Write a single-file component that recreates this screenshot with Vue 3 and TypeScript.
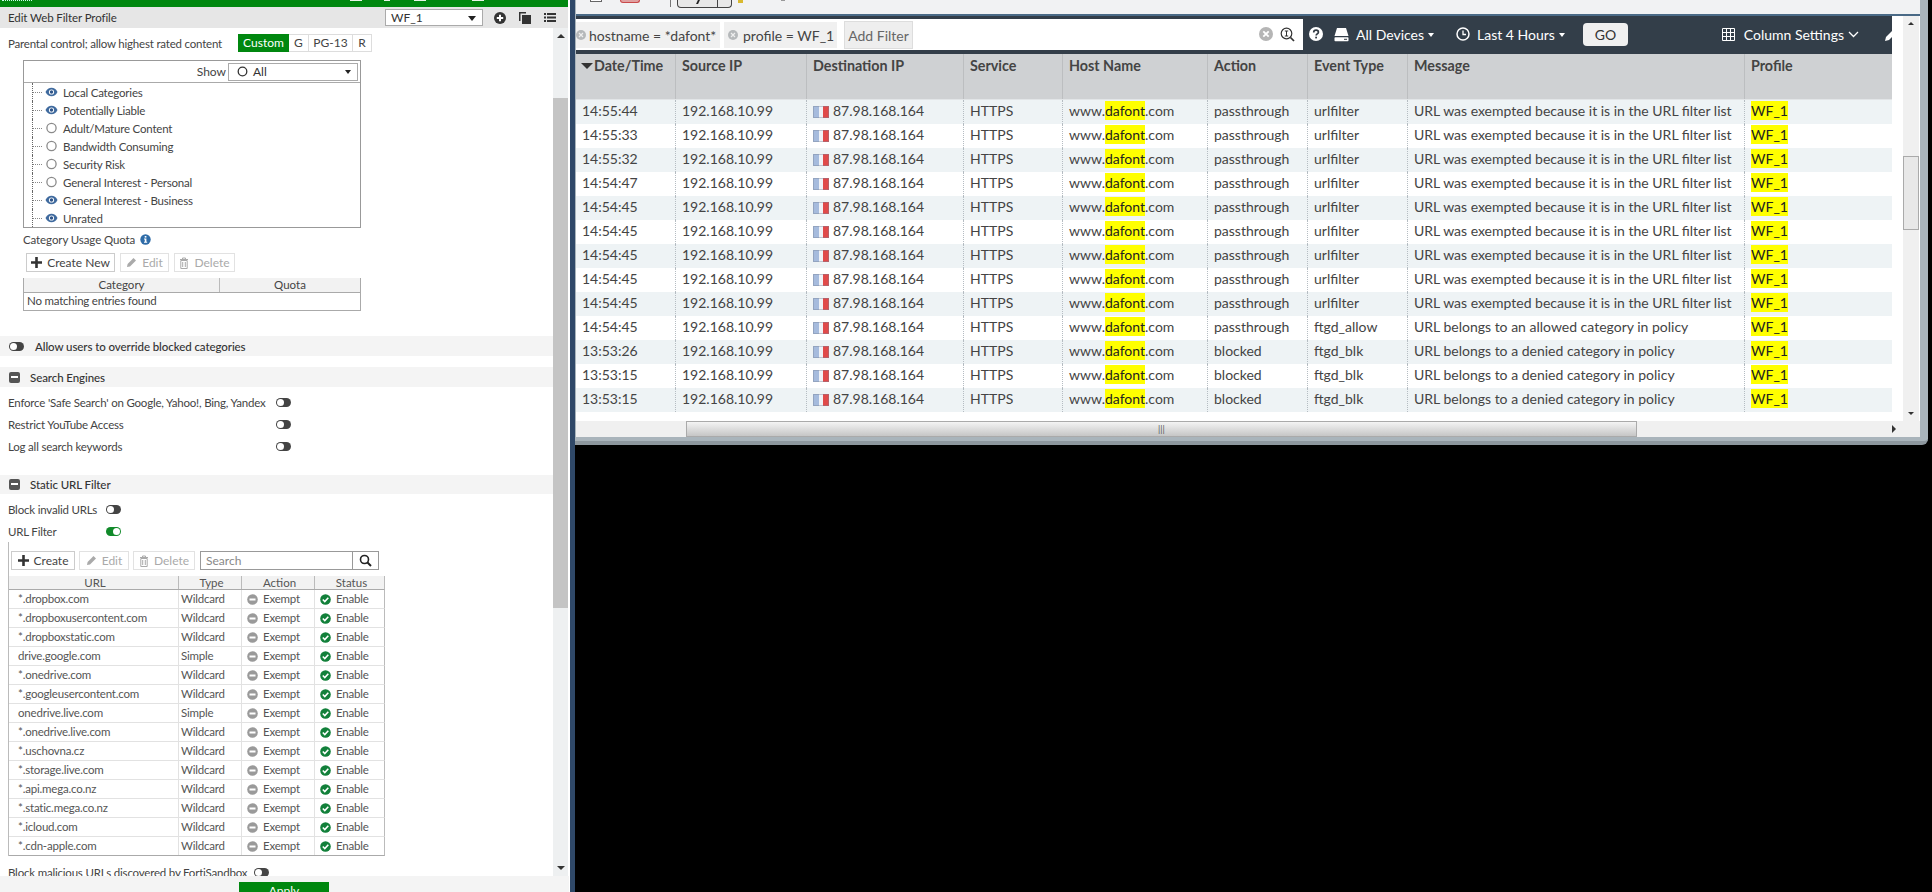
<script setup lang="ts">
interface LogRow { time: string; action: string; type: string; msg: string }
const exempt = 'URL was exempted because it is in the URL filter list'
const denied = 'URL belongs to a denied category in policy'
const logRows: LogRow[] = [
  ...['14:55:44', '14:55:33', '14:55:32', '14:54:47', '14:54:45', '14:54:45', '14:54:45', '14:54:45', '14:54:45'].map(time => ({ time, action: 'passthrough', type: 'urlfilter', msg: exempt })),
  { time: '14:54:45', action: 'passthrough', type: 'ftgd_allow', msg: 'URL belongs to an allowed category in policy' },
  { time: '13:53:26', action: 'blocked', type: 'ftgd_blk', msg: denied },
  { time: '13:53:15', action: 'blocked', type: 'ftgd_blk', msg: denied },
  { time: '13:53:15', action: 'blocked', type: 'ftgd_blk', msg: denied },
]
const logHead = ['Source IP', 'Destination IP', 'Service', 'Host Name', 'Action', 'Event Type', 'Message', 'Profile']
const cats = [
  { n: 'Local Categories', eye: true }, { n: 'Potentially Liable', eye: true },
  { n: 'Adult/Mature Content', eye: false }, { n: 'Bandwidth Consuming', eye: false },
  { n: 'Security Risk', eye: false }, { n: 'General Interest - Personal', eye: false },
  { n: 'General Interest - Business', eye: true }, { n: 'Unrated', eye: true },
]
const urls = [
  ['*.dropbox.com', 'Wildcard'], ['*.dropboxusercontent.com', 'Wildcard'], ['*.dropboxstatic.com', 'Wildcard'],
  ['drive.google.com', 'Simple'], ['*.onedrive.com', 'Wildcard'], ['*.googleusercontent.com', 'Wildcard'],
  ['onedrive.live.com', 'Simple'], ['*.onedrive.live.com', 'Wildcard'], ['*.uschovna.cz', 'Wildcard'],
  ['*.storage.live.com', 'Wildcard'], ['*.api.mega.co.nz', 'Wildcard'], ['*.static.mega.co.nz', 'Wildcard'],
  ['*.icloud.com', 'Wildcard'], ['*.cdn-apple.com', 'Wildcard'],
]
</script>

<template>
  <div class="root">
    <section class="left">
      <div class="green"><i class="dash"></i><i class="bit b1"></i><i class="bit b2"></i><i class="bit b3"></i><i class="bit b4"></i></div>
      <header class="title">
        <span>Edit Web Filter Profile</span>
        <div class="sel prof"><span>WF_1</span><i class="caret"></i></div>
        <svg class="ti" width="14" height="14" viewBox="0 0 14 14"><circle cx="7" cy="7" r="6" fill="#333"/><path d="M3.8 7h6.4M7 3.8v6.4" stroke="#fff" stroke-width="2"/></svg>
        <svg class="ti" width="14" height="14" viewBox="0 0 14 14"><path d="M1 1h7v1.500H2.500V10H1z" fill="#333"/><rect x="4" y="4" width="9" height="9" fill="#333"/></svg>
        <svg class="ti" width="14" height="14" viewBox="0 0 14 14"><path d="M1 2h2v2H1zM4 2h9v2H4zM1 5.500h2v2H1zM4 5.500h9v2H4zM1 9h2v2H1zM4 9h9v2H4z" fill="#333"/></svg>
      </header>
      <div class="mid">
        <div class="content">
          <div class="parental">
            <span class="plabel">Parental control; allow highest rated content</span>
            <div class="seg"><b>Custom</b><span class="sg">G</span><span class="sp">PG-13</span><span class="sr">R</span></div>
          </div>
          <div class="tree">
            <div class="treehead">
              <span>Show</span>
              <div class="sel show"><svg width="11" height="11" viewBox="0 0 11 11"><circle cx="5.500" cy="5.500" r="4.300" fill="none" stroke="#333" stroke-width="1.300"/></svg><span>All</span><i class="caret small"></i></div>
            </div>
            <div v-for="c in cats" :key="c.n" class="treerow">
              <i class="branch"></i>
              <svg v-if="c.eye" class="tic" width="13" height="10" viewBox="0 0 13 10"><path d="M.5 5C2 2 4 .8 6.500.8S11 2 12.500 5C11 8 9 9.200 6.500 9.200S2 8 .5 5z" fill="#3f6a9e"/><circle cx="6.500" cy="5" r="2.600" fill="#fff"/><circle cx="6.500" cy="5" r="1.700" fill="#2f5488"/></svg>
              <svg v-else class="tic" width="13" height="12" viewBox="0 0 13 12"><circle cx="6.500" cy="6" r="4.600" fill="none" stroke="#8a8a8a" stroke-width="1.300"/></svg>
              <span>{{ c.n }}</span>
            </div>
          </div>
          <div class="quota">Category Usage Quota
            <svg width="11" height="11" viewBox="0 0 11 11"><circle cx="5.500" cy="5.500" r="5.200" fill="#2f6ca8"/><rect x="4.700" y="2" width="1.700" height="1.600" fill="#fff"/><path d="M4 4.500h2.400v3.300h.8v1H4v-1h.8V5.500H4z" fill="#fff"/></svg>
          </div>
          <div class="btns quotabtns">
            <div class="btn w89"><svg width="11" height="11" viewBox="0 0 11 11"><path d="M4.200 0h2.600v4.200H11v2.600H6.800V11H4.200V6.800H0V4.200h4.200z" fill="#333"/></svg>Create New</div>
            <div class="btn dis w49"><svg width="11" height="11" viewBox="0 0 11 11"><path d="M1 10l.6-3L7.500 1l2.500 2.500L4 9.500z" fill="#aaa"/></svg>Edit</div>
            <div class="btn dis w61"><svg width="10" height="12" viewBox="0 0 10 12"><path d="M1 2.500h8M3.500 2.500V1h3v1.500M1.800 3.500h6.400V11.500H1.800z" fill="none" stroke="#aaa"/><path d="M3.700 5v5M6.300 5v5" stroke="#aaa"/></svg>Delete</div>
          </div>
          <div class="qtable">
            <div class="qhead"><span class="qc1">Category</span><span class="qc2">Quota</span></div>
            <div class="qbody">No matching entries found</div>
          </div>

          <div class="band allow"><i class="tog"></i><span>Allow users to override blocked categories</span></div>
          <div class="band se"><i class="minus"></i><span>Search Engines</span></div>
          <div class="frow f1"><span class="flabel wide">Enforce 'Safe Search' on Google, Yahoo!, Bing, Yandex</span><i class="tog"></i></div>
          <div class="frow"><span class="flabel wide">Restrict YouTube Access</span><i class="tog"></i></div>
          <div class="frow"><span class="flabel wide">Log all search keywords</span><i class="tog"></i></div>
          <div class="band su"><i class="minus"></i><span>Static URL Filter</span></div>
          <div class="frow f1"><span class="flabel">Block invalid URLs</span><i class="tog"></i></div>
          <div class="frow"><span class="flabel">URL Filter</span><i class="tog on"></i></div>
          <div class="urlwrap">
            <div class="btns urlbtns">
              <div class="btn w64"><svg width="11" height="11" viewBox="0 0 11 11"><path d="M4.200 0h2.600v4.200H11v2.600H6.800V11H4.200V6.800H0V4.200h4.200z" fill="#333"/></svg>Create</div>
              <div class="btn dis w50"><svg width="11" height="11" viewBox="0 0 11 11"><path d="M1 10l.6-3L7.500 1l2.500 2.500L4 9.500z" fill="#aaa"/></svg>Edit</div>
              <div class="btn dis w62"><svg width="10" height="12" viewBox="0 0 10 12"><path d="M1 2.500h8M3.500 2.500V1h3v1.500M1.800 3.500h6.400V11.500H1.800z" fill="none" stroke="#aaa"/><path d="M3.700 5v5M6.300 5v5" stroke="#aaa"/></svg>Delete</div>
              <div class="search"><span>Search</span><div class="sbtn"><svg width="13" height="13" viewBox="0 0 13 13"><circle cx="5.500" cy="5.500" r="4" fill="none" stroke="#222" stroke-width="1.600"/><path d="M8.500 8.500L12 12" stroke="#222" stroke-width="2"/></svg></div></div>
            </div>
            <div class="urow uhead"><span>URL</span><span>Type</span><span>Action</span><span>Status</span></div>
            <div v-for="u in urls" :key="u[0]" class="urow">
              <span class="u1">{{ u[0] }}</span>
              <span class="u2">{{ u[1] }}</span>
              <span class="st"><svg width="11" height="11" viewBox="0 0 11 11"><circle cx="5.500" cy="5.500" r="5.300" fill="#9a9a9a"/><rect x="2.500" y="4.500" width="6" height="2" fill="#fff"/></svg>Exempt</span>
              <span class="st"><svg width="11" height="11" viewBox="0 0 11 11"><circle cx="5.500" cy="5.500" r="5.300" fill="#12803a"/><path d="M2.800 5.500l2 2 3.500-3.700" fill="none" stroke="#fff" stroke-width="1.600"/></svg>Enable</span>
            </div>
          </div>
          <div class="frow mal"><span>Block malicious URLs discovered by FortiSandbox</span><i class="tog"></i></div>
        </div>
        <div class="lscroll">
          <i class="up"></i>
          <div class="lthumb"></div>
          <i class="down"></i>
        </div>
      </div>
      <footer class="foot"><div class="apply">Apply</div></footer>
    </section>

    <div class="strip"></div>

    <section class="win">
      <div class="tools">
        <i class="tsq"></i><i class="tred"></i><i class="tline"></i>
        <div class="tseg"><span class="tplay"><i class="tick"></i></span><span class="tend"></span></div>
        <i class="tyel"></i><i class="tgrey"></i>
      </div>
      <div class="navy"></div>
      <div class="winbody">
        <div class="logcol">
          <div class="fbar">
            <div class="finput">
              <div class="chip c1"><svg class="cx" width="10" height="10" viewBox="0 0 10 10"><circle cx="5" cy="5" r="5" fill="#b5b8ba"/><path d="M3 3l4 4M7 3l-4 4" stroke="#eee" stroke-width="1.200"/></svg>hostname = *dafont*</div>
              <div class="chip c2"><svg class="cx" width="10" height="10" viewBox="0 0 10 10"><circle cx="5" cy="5" r="5" fill="#b5b8ba"/><path d="M3 3l4 4M7 3l-4 4" stroke="#eee" stroke-width="1.200"/></svg>profile = WF_1</div>
              <div class="addf">Add Filter</div>
              <div class="grow"></div>
              <svg class="clr" width="14" height="14" viewBox="0 0 14 14"><circle cx="7" cy="7" r="7" fill="#b5b5b5"/><path d="M4.300 4.300l5.400 5.400M9.700 4.300l-5.400 5.400" stroke="#fff" stroke-width="1.800"/></svg>
              <svg class="zi" width="15" height="15" viewBox="0 0 15 15"><circle cx="6.500" cy="6.500" r="5.300" fill="none" stroke="#333" stroke-width="1.200"/><path d="M10.500 10.500L14 14" stroke="#333" stroke-width="1.700"/><path d="M4.800 4h3.400M4.800 9h3.400M6.500 4v5" stroke="#333"/></svg>
            </div>
            <div class="fright">
              <svg class="ico" width="14" height="14" viewBox="0 0 14 14"><circle cx="7" cy="7" r="7" fill="#fff"/><path d="M4.700 5.400c0-1.400 1-2.200 2.400-2.200s2.300.8 2.300 2c0 1.700-2.200 1.700-2.200 3.300" fill="none" stroke="#333b44" stroke-width="1.700"/><rect x="6.200" y="9.700" width="1.800" height="1.700" fill="#333b44"/></svg>
              <svg class="ico dev" width="15" height="15" viewBox="0 0 15 15"><path d="M3 1h9l2.500 8H.5z" fill="#fff"/><rect x=".5" y="10.300" width="14" height="4" rx=".8" fill="#fff"/><rect x="10" y="11.800" width="3" height="1" fill="#333b44"/></svg>
              <span class="dtxt">All Devices</span><i class="wcaret"></i>
              <svg class="ico clk" width="14" height="14" viewBox="0 0 14 14"><circle cx="7" cy="7" r="6" fill="none" stroke="#fff" stroke-width="1.500"/><path d="M7 3.500V7.500h3" fill="none" stroke="#fff" stroke-width="1.300"/></svg>
              <span class="dtxt">Last 4 Hours</span><i class="wcaret"></i>
              <div class="go">GO</div>
              <div class="grow"></div>
              <svg class="ico" width="13" height="13" viewBox="0 0 13 13"><path d="M.5.500h12v12H.5zM.5 4.500h12M.5 8.500h12M4.500.5v12M8.500.5v12" fill="none" stroke="#fff"/></svg>
              <span class="dtxt cs">Column Settings</span>
              <svg class="ico chev" width="11" height="7" viewBox="0 0 11 7"><path d="M1 1l4.500 4.500L10 1" fill="none" stroke="#fff" stroke-width="1.300"/></svg>
              <svg class="ico pen" width="11" height="14" viewBox="0 0 11 14"><path d="M0 14l1-4 8-8 3 3-8 8z" fill="#fff"/></svg>
            </div>
          </div>
          <div class="lgrid lhead">
            <div class="lh first"><i class="tri"></i>Date/Time</div>
            <div v-for="h in logHead" :key="h" class="lh">{{ h }}</div>
          </div>
          <div v-for="(r, i) in logRows" :key="i" class="lgrid lrow">
            <div class="lc">{{ r.time }}</div>
            <div class="lc">192.168.10.99</div>
            <div class="lc"><i class="flag"></i>87.98.168.164</div>
            <div class="lc">HTTPS</div>
            <div class="lc">www.<mark>dafont</mark>.com</div>
            <div class="lc">{{ r.action }}</div>
            <div class="lc">{{ r.type }}</div>
            <div class="lc">{{ r.msg }}</div>
            <div class="lc"><mark>WF_1</mark></div>
          </div>
        </div>
        <div class="vscroll"><i class="up sm"></i><div class="vthumb"></div><i class="down sm"></i></div>
      </div>
      <div class="hscroll">
        <div class="hthumb"><span>|||</span></div>
        <div class="grow"></div>
        <i class="hright"></i>
      </div>
    </section>
  </div>
</template>

<style>
html, body { margin: 0; background: #000; }
</style>

<style scoped>
.root { width: 1932px; height: 892px; display: flex; background: #000; overflow: hidden; font-family: Lato, "Liberation Sans", sans-serif; }
.grow { flex: 1; }
.left { width: 570px; height: 892px; display: flex; flex-direction: column; background: #fff; font-size: 11.500px; letter-spacing: -.2px; color: #444; flex: none; }
.green { height: 7px; background: #00870f; display: flex; flex: none; overflow: hidden; margin-right: 2px; }
.dash { width: 30px; height: 1px; margin-left: 2px; border-top: 1px dotted #cfe; }
.bit { height: 1px; width: 12px; background: #e8f5e8; }
.b1 { margin-left: 318px; }
.b2 { margin-left: 22px; width: 6px; }
.b3 { margin-left: 24px; }
.b4 { margin-left: 46px; }
.title { height: 21px; flex: none; background: #e6e6e6; margin-right: 2px; display: flex; align-items: center; padding-left: 8px; color: #333; letter-spacing: -.1px; }
.title > span { width: 381px; }
.sel { background: #fff; border: 1px solid #aaa; box-sizing: border-box; display: flex; align-items: center; position: relative; color: #333; font-size: 12px; letter-spacing: 0; }
.prof { width: 99px; height: 17px; padding-left: 5px; margin-right: 10px; }
.caret { position: absolute; right: 6px; top: 6px; border: 4px solid transparent; border-top: 5px solid #222; border-bottom: 0; }
.caret.small { right: 6px; border-width: 3.500px; border-top-width: 4px; border-bottom-width: 0; }
.ti { margin-right: 11px; flex: none; }
.mid { flex: 1; display: flex; min-height: 0; }
.content { width: 553px; height: 848px; overflow: hidden; flex: none; }
.lscroll { width: 15px; background: #eef0f1; display: flex; flex-direction: column; align-items: center; }
.up { margin-top: 6px; border: 4px solid transparent; border-bottom: 4px solid #333; border-top: 0; display: block; }
.lthumb { width: 15px; height: 510px; margin-top: 60px; background: #c4c4c4; }
.down { margin-top: auto; margin-bottom: 6px; border: 4px solid transparent; border-top: 4px solid #333; border-bottom: 0; display: block; }
.parental { height: 18px; margin-top: 6px; padding-left: 8px; display: flex; align-items: center; white-space: nowrap; }
.plabel { width: 230px; color: #444; flex: none; }
.seg { display: flex; height: 18px; border: 1px solid #ddd; box-sizing: border-box; line-height: 16px; font-size: 12px; letter-spacing: 0; }
.seg b { width: 51px; margin: -1px 0 -1px -1px; height: 18px; line-height: 18px; background: #00870f; color: #fff; font-weight: 400; text-align: center; }
.seg span { text-align: center; border-right: 1px solid #ddd; box-sizing: border-box; }
.sg { width: 20px; }
.sp { width: 44px; }
.sr { width: 18px; border-right: 0 !important; }
.tree { margin: 8px 0 0 23px; width: 338px; height: 168px; border: 1px solid #999; box-sizing: border-box; }
.treehead { height: 22px; border-bottom: 1px solid #aaa; box-sizing: border-box; display: flex; align-items: center; justify-content: flex-end; padding-right: 2px; gap: 2px; font-size: 12px; letter-spacing: 0; }
.show { width: 130px; height: 18px; padding-left: 8px; gap: 5px; }
.treerow { height: 18px; display: flex; align-items: center; white-space: nowrap; }
.branch { width: 9px; height: 18px; margin-left: 8px; border-left: 1px dotted #666; box-sizing: border-box; position: relative; flex: none; }
.branch::after { content: ""; position: absolute; left: 0; top: 9px; width: 9px; border-top: 1px dotted #888; }
.tic { width: 13px; margin: 0 5px 0 4px; flex: none; }
.quota { margin: 1px 0 0 23px; height: 24px; padding-bottom: 3px; box-sizing: border-box; display: flex; align-items: center; gap: 5px; letter-spacing: -.1px; }
.btns { display: flex; }
.btn { height: 19px; box-sizing: border-box; border: 1px solid #ccc; display: flex; align-items: center; justify-content: center; gap: 5px; color: #444; flex: none; font-size: 12px; letter-spacing: 0; }
.btn.dis { color: #aaa; border-color: #e2e2e2; }
.quotabtns { margin-left: 26px; gap: 5px; }
.w89 { width: 89px; } .w49 { width: 49px; } .w61 { width: 61px; } .w64 { width: 64px; } .w50 { width: 50px; } .w62 { width: 62px; }
.qtable { margin: 6px 0 0 23px; width: 338px; border: 1px solid #aaa; border-top: 0; box-sizing: border-box; }
.qhead { height: 14px; background: #f2f2f2; border-bottom: 1px solid #aaa; display: flex; line-height: 13px; text-align: center; letter-spacing: 0; }
.qc1 { width: 195px; border-right: 1px solid #bbb; }
.qc2 { flex: 1; }
.qbody { height: 17px; line-height: 16px; padding-left: 3px; }
.band { background: #f4f4f4; height: 20px; display: flex; align-items: center; padding-left: 9px; color: #333; font-weight: 500; letter-spacing: -.08px; }
.allow { margin-top: 25px; gap: 11px; }
.se { margin-top: 11px; gap: 10px; }
.su { margin-top: 18px; height: 19px; gap: 10px; }
.minus { width: 11px; height: 11px; background: #555; border-radius: 2px; position: relative; flex: none; }
.minus::after { content: ""; position: absolute; left: 2px; right: 2px; top: 4px; height: 2px; background: #fff; }
.tog { width: 15px; height: 9px; border-radius: 5px; background: #444; position: relative; display: block; flex: none; }
.tog::after { content: ""; position: absolute; left: 1px; top: 1px; width: 7px; height: 7px; border-radius: 50%; background: #fff; }
.tog.on { background: #118a2a; }
.tog.on::after { left: 7px; }
.frow { height: 22px; display: flex; align-items: center; padding-left: 8px; white-space: nowrap; }
.f1 { margin-top: 4px; }
.flabel { width: 98px; flex: none; }
.flabel.wide { width: 268px; }
.urlwrap { margin: 0 0 0 8px; width: 377px; border-left: 1px solid #bbb; box-sizing: border-box; padding-top: 9px; }
.urlbtns { margin-left: 2px; gap: 4px; }
.search { margin-left: 1px; width: 179px; height: 19px; border: 1px solid #999; box-sizing: border-box; display: flex; color: #888; line-height: 17px; padding-left: 5px; font-size: 12px; letter-spacing: 0; }
.search span { flex: 1; }
.sbtn { width: 25px; border-left: 1px solid #999; display: flex; align-items: center; justify-content: center; }
.urow { display: grid; grid-template-columns: 170px 63px 73px 70px; width: 376px; height: 19px; box-sizing: border-box; border-bottom: 1px solid #e2e2e2; border-right: 1px solid #bbb; line-height: 18px; color: #555; }
.urow:last-child { border-bottom: 1px solid #aaa; }
.urow span { border-right: 1px solid #e2e2e2; padding-left: 3px; box-sizing: border-box; overflow: hidden; white-space: nowrap; }
.urow span:last-child { border-right: 0; }
.uhead { margin-top: 6px; height: 14px; line-height: 13px; background: #f2f2f2; border-bottom: 1px solid #aaa; text-align: center; letter-spacing: 0; }
.uhead span { border-right: 1px solid #bbb; }
.urow .u1 { padding-left: 9px; }
.urow .u2 { padding-left: 2px; }
.st { display: flex; align-items: center; gap: 5px; padding-left: 5px !important; }
.mal { height: 22px; padding-left: 8px; gap: 7px; margin-top: 5px; }
.foot { height: 16px; background: #f4f4f4; flex: none; overflow: hidden; margin-right: 1px; }
.apply { margin: 6px 0 0 239px; width: 90px; height: 20px; background: #00870f; color: #fff; text-align: center; line-height: 18px; font-size: 12px; letter-spacing: 0; }
.strip { width: 5px; height: 892px; flex: none; background: #2f4868; }
.win { width: 1353px; height: 445px; flex: none; box-sizing: border-box; background: #a9b4bb; border-bottom: 4px solid #8d979e; border-bottom-right-radius: 6px; padding: 0 8px 4px 1px; display: flex; flex-direction: column; font-size: 14px; color: #444; }
.tools { height: 14px; background: #f1f2f3; flex: none; display: flex; overflow: hidden; }
.tools i { display: block; flex: none; }
.tsq { width: 12px; height: 2px; margin-left: 14px; background: #fff; border: 1px solid #666; border-top: 0; box-sizing: border-box; }
.tred { width: 20px; height: 3px; margin-left: 18px; background: #e0a0a0; border: 1px solid #c94a4a; border-top: 0; box-sizing: border-box; border-radius: 0 0 8px 8px; }
.tline { width: 1px; height: 7px; margin-left: 30px; background: #777; }
.tseg { margin-left: 6px; width: 55px; height: 8px; display: flex; border: 1px solid #444; border-top: 0; border-radius: 0 0 4px 4px; box-sizing: border-box; background: #e8e8e8; }
.tplay { width: 40px; border-right: 1px solid #444; box-sizing: border-box; display: flex; justify-content: center; }
.tools .tick { width: 2px; height: 4px; background: #222; transform: skewX(-25deg); }
.tend { flex: 1; }
.tools .tyel { width: 5px; height: 3px; margin-left: 6px; background: #d9b92e; }
.tools .tgrey { width: 4px; height: 1px; margin-left: 38px; background: #999; }
.navy { height: 2px; flex: none; background: #4a6a86; }
.winbody { flex: 1; min-height: 0; display: flex; background: #fff; }
.logcol { width: 1316px; flex: none; overflow: hidden; margin-right: 11px; }
.fbar { height: 38px; display: flex; background: #333e49; }
.finput { width: 727px; height: 31px; margin-top: 3px; background: #fff; padding: 3px 0 0 0; box-sizing: border-box; display: flex; flex: none; }
.chip { height: 26px; background: #f0f0f0; display: flex; align-items: center; color: #444; flex: none; box-sizing: border-box; white-space: nowrap; }
.cx { flex: none; }
.c1 { width: 144px; gap: 3px; }
.c2 { width: 113px; margin-left: 4px; padding-left: 4px; gap: 5px; }
.addf { margin: -1px 0 0 7px; width: 69px; height: 28px; background: #eee; border: 1px solid #ddd; box-sizing: border-box; color: #666; text-align: center; line-height: 27px; white-space: nowrap; }
.clr { margin: 5px 7px 0 0; flex: none; }
.zi { margin: 5px 8px 0 0; flex: none; }
.fright { flex: 1; display: flex; align-items: center; color: #fff; padding: 0 0 0 6px; height: 36px; overflow: hidden; min-width: 0; }
.ico { flex: none; }
.dev { margin-left: 11px; }
.dtxt { margin-left: 7px; white-space: nowrap; flex: none; }
.wcaret { border: 3.500px solid transparent; border-top: 4px solid #fff; border-bottom: 0; margin-left: 4px; margin-top: 2px; flex: none; }
.clk { margin-left: 22px; }
.go { margin-left: 18px; width: 45px; height: 23px; background: #f0f0f0; border-radius: 4px; color: #333; text-align: center; line-height: 23px; flex: none; }
.cs { margin-left: 9px; }
.chev { margin-left: 4px; }
.pen { margin: 0 -4px 0 26px; }
.lgrid { display: grid; grid-template-columns: 100px 131px 157px 99px 145px 100px 100px 337px 147px; }
.lhead { height: 45px; background: #cfd1d3; border-bottom: 1px solid #e2e5e7; box-sizing: content-box; }
.lh { padding: 3px 0 0 6px; font-weight: 700; color: #444; border-right: 1px solid #bcbec0; box-sizing: border-box; font-size: 14.300px; white-space: nowrap; }
.lh:last-child { border-right: 0; }
.first { padding-left: 5px; }
.tri { display: inline-block; border: 6px solid transparent; border-top: 6px solid #333; border-bottom: 0; margin-right: 1px; vertical-align: 2px; }
.lrow { height: 24px; line-height: 21px; }
.lrow:nth-of-type(even) { background: #fff; }
.lrow:nth-of-type(odd) { background: #eef3f5; }
.lc { padding-left: 6px; border-right: 1px dotted #b5bcc2; box-sizing: border-box; white-space: nowrap; overflow: hidden; }
.lc:last-child { border-right: 0; }
.flag { display: inline-block; width: 16px; height: 12px; margin-right: 4px; vertical-align: -2px; background: linear-gradient(90deg, #a6bbdd 0 35%, #f0f2f6 35% 65%, #e04a4a 65% 100%); box-shadow: inset 0 0 0 1px rgba(120,130,150,.4); }
mark { background: #ffff00; color: #222; padding: 1px 0; }
.vscroll { width: 16px; flex: none; background: #f0f0f0; display: flex; flex-direction: column; align-items: center; position: relative; }
.sm { border-width: 3px; }
.vthumb { position: absolute; top: 140px; left: 0; width: 16px; height: 74px; background: #e8e8e8; border: 1px solid #aaa; box-sizing: border-box; }
.hscroll { height: 16px; flex: none; background: #f0f0f0; display: flex; align-items: center; padding-right: 24px; }
.hthumb { margin-left: 110px; width: 951px; height: 16px; background: linear-gradient(#f4f4f4, #c6c6c6); border: 1px solid #aaa; box-sizing: border-box; text-align: center; font-size: 9px; line-height: 14px; color: #555; }
.hright { border: 4px solid transparent; border-left: 4px solid #333; border-right: 0; }
</style>
